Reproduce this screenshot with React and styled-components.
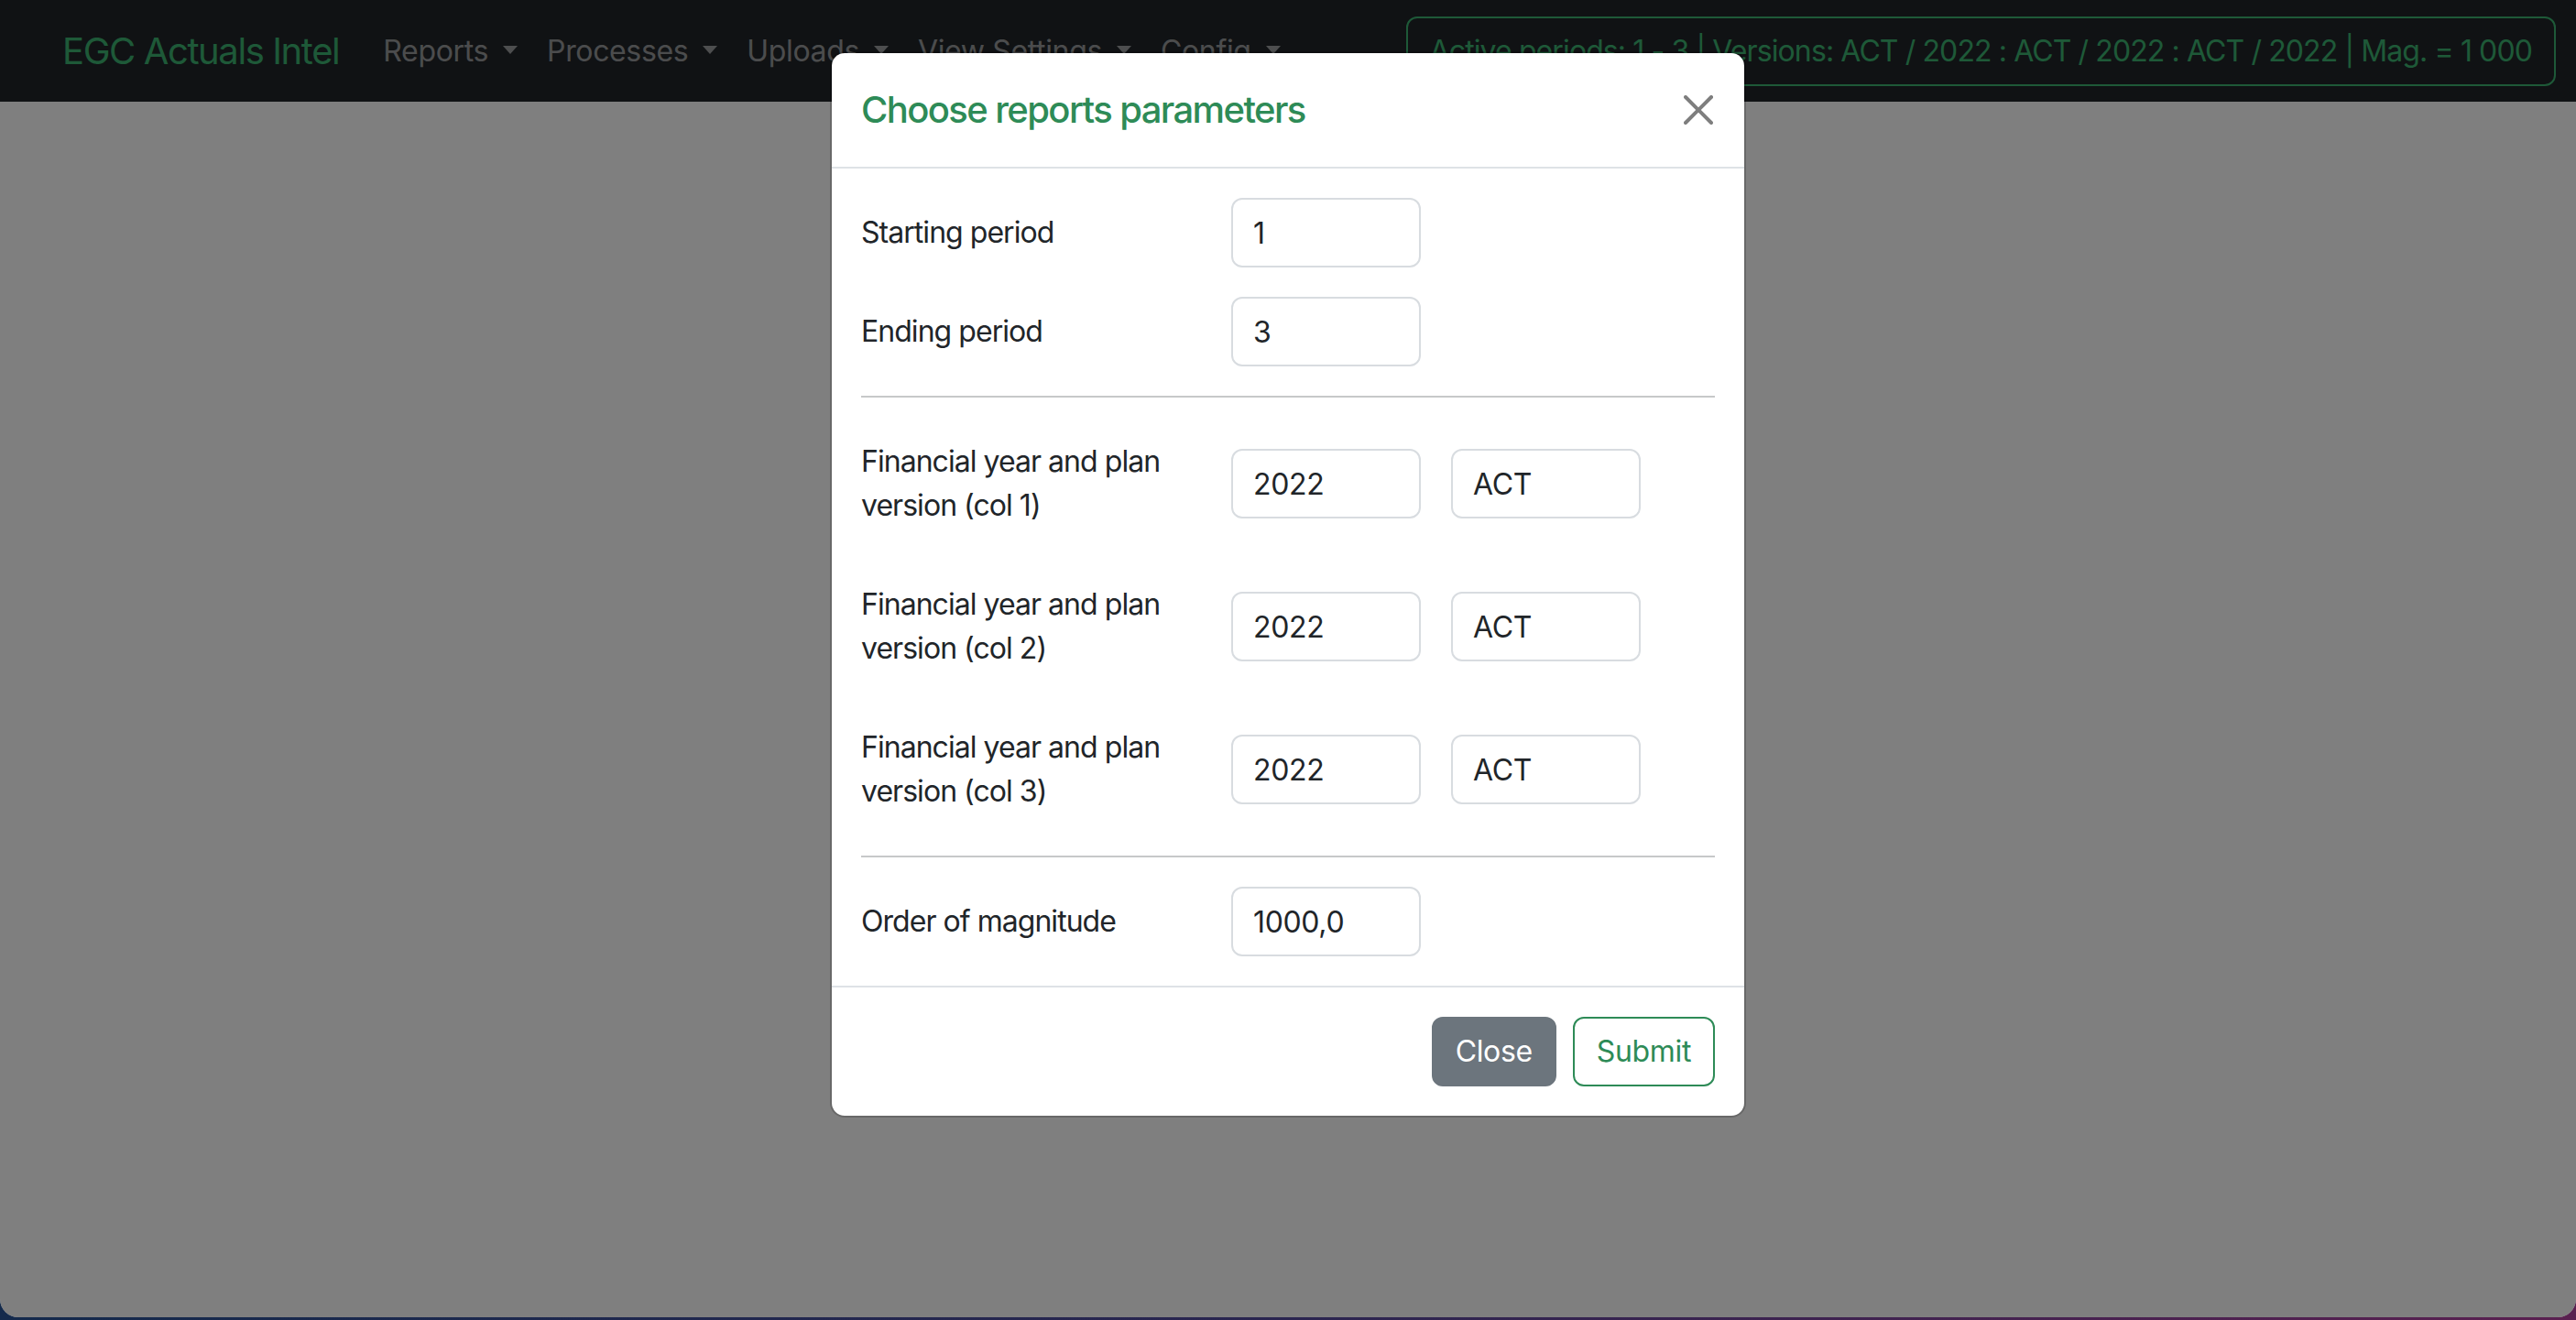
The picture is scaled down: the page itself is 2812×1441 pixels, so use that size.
import React from "react";
import styled, { createGlobalStyle } from "styled-components";

const GlobalStyle = createGlobalStyle`
  html, body { margin: 0; padding: 0; }
  body {
    font-family: Inter, "Noto Sans", "Liberation Sans", sans-serif;
    color: #212529;
    letter-spacing: -0.022em;
    overflow: hidden;
  }
  * { box-sizing: border-box; }
  input, button { letter-spacing: inherit; }
`;

const Desktop = styled.div`
  width: 100vw;
  height: 100vh;
  background: linear-gradient(90deg, #142a4c 0%, #2a2550 50%, #5a2050 100%);
`;

const Window = styled.div`
  position: relative;
  height: 1438px;
  background: #fff;
  border-radius: 0 0 20px 20px;
  overflow: hidden;
`;

const Navbar = styled.nav`
  height: 111px;
  background: #212529;
  display: flex;
  align-items: center;
  padding: 0 22px 0 68px;
`;

const Brand = styled.a`
  font-size: 40px;
  line-height: 60px;
  letter-spacing: -0.035em;
  color: #3cb371;
  margin-right: 32px;
  text-decoration: none;
`;

const NavList = styled.ul`
  display: flex;
  list-style: none;
  margin: 0;
  padding: 0;
`;

const NavLink = styled.li`
  font-size: 32px;
  line-height: 48px;
  padding: 16px 16px;
  color: rgba(255, 255, 255, 0.55);
  white-space: nowrap;
  &::after {
    content: "";
    display: inline-block;
    margin-left: 16px;
    vertical-align: 8px;
    border-top: 9px solid;
    border-left: 8px solid transparent;
    border-right: 8px solid transparent;
  }
`;

const ActiveBox = styled.div`
  margin-left: auto;
  font-size: 32px;
  line-height: 48px;
  letter-spacing: -0.028em;
  padding: 12px 24px;
  border: 2px solid #3cb371;
  border-radius: 12px;
  color: #3cb371;
  white-space: nowrap;
`;

const Backdrop = styled.div`
  position: absolute;
  inset: 0;
  background: rgba(0, 0, 0, 0.5);
`;

const ModalLayer = styled.div`
  position: absolute;
  inset: 0;
  display: flex;
  justify-content: center;
  align-items: flex-start;
  padding-top: 56px;
`;

const Modal = styled.div`
  width: 1000px;
  background: #fff;
  border: 2px solid rgba(0, 0, 0, 0.175);
  border-radius: 16px;
  background-clip: padding-box;
`;

const ModalHeader = styled.div`
  display: flex;
  align-items: center;
  padding: 32px;
  border-bottom: 2px solid #dee2e6;
`;

const ModalTitle = styled.h5`
  margin: 0;
  font-size: 40px;
  line-height: 60px;
  font-weight: 500;
  letter-spacing: -0.04em;
  color: #2e8b57;
`;

const CloseX = styled.button`
  margin: -16px -6px -16px auto;
  width: 48px;
  height: 48px;
  padding: 8px;
  border: 0;
  background: transparent;
  display: flex;
  align-items: center;
  justify-content: center;
  opacity: 0.5;
`;

const ModalBody = styled.div`
  padding: 32px;
`;

const FormRow = styled.div`
  display: flex;
  align-items: center;
  margin-bottom: ${(p) => (p.$last ? "0" : "32px")};
`;

const Label = styled.label`
  flex: 0 0 404px;
  padding: 14px 24px 14px 0;
  font-size: 32px;
  line-height: 48px;
  letter-spacing: -0.03em;
  color: #212529;
`;

const Inputs = styled.div`
  display: flex;
  gap: 33px;
`;

const Input = styled.input`
  width: 207px;
  height: 76px;
  padding: 12px 22px;
  font-family: inherit;
  font-size: 32px;
  line-height: 48px;
  color: #212529;
  border: 2px solid #d8dce0;
  border-radius: 12px;
  background: #fff;
  outline: none;
`;

const Divider = styled.hr`
  margin: 32px 0;
  border: 0;
  border-top: 2px solid #212529;
  opacity: 0.25;
`;

const ModalFooter = styled.div`
  display: flex;
  justify-content: flex-end;
  gap: 18px;
  padding: 32px;
  border-top: 2px solid #dee2e6;
`;

const Button = styled.button`
  font-family: inherit;
  font-size: 32px;
  line-height: 48px;
  padding: 12px 24px;
  border-radius: 12px;
  border: 2px solid ${(p) => (p.$variant === "secondary" ? "#6c757d" : "#2e8b57")};
  background: ${(p) => (p.$variant === "secondary" ? "#6c757d" : "transparent")};
  color: ${(p) => (p.$variant === "secondary" ? "#fff" : "#2e8b57")};
`;

const XIcon = () => (
  <svg width="32" height="32" viewBox="0 0 16 16" fill="#000">
    <path d="M.293.293a1 1 0 0 1 1.414 0L8 6.586 14.293.293a1 1 0 1 1 1.414 1.414L9.414 8l6.293 6.293a1 1 0 0 1-1.414 1.414L8 9.414l-6.293 6.293a1 1 0 0 1-1.414-1.414L6.586 8 .293 1.707a1 1 0 0 1 0-1.414z" />
  </svg>
);

const navItems = ["Reports", "Processes", "Uploads", "View Settings", "Config"];

const fyRows = [1, 2, 3];

export default function App() {
  return (
    <>
      <GlobalStyle />
      <Desktop>
        <Window>
          <Navbar>
            <Brand>EGC Actuals Intel</Brand>
            <NavList>
              {navItems.map((n) => (
                <NavLink key={n}>{n}</NavLink>
              ))}
            </NavList>
            <ActiveBox>
              Active periods: 1 - 3 | Versions: ACT / 2022 : ACT / 2022 : ACT / 2022 | Mag. = 1 000
            </ActiveBox>
          </Navbar>
          <Backdrop />
          <ModalLayer>
            <Modal>
              <ModalHeader>
                <ModalTitle>Choose reports parameters</ModalTitle>
                <CloseX aria-label="Close">
                  <XIcon />
                </CloseX>
              </ModalHeader>
              <ModalBody>
                <FormRow>
                  <Label>Starting period</Label>
                  <Inputs>
                    <Input defaultValue="1" />
                  </Inputs>
                </FormRow>
                <FormRow $last>
                  <Label>Ending period</Label>
                  <Inputs>
                    <Input defaultValue="3" />
                  </Inputs>
                </FormRow>
                <Divider />
                {fyRows.map((i) => (
                  <FormRow key={i} $last={i === 3}>
                    <Label>Financial year and plan version (col {i})</Label>
                    <Inputs>
                      <Input defaultValue="2022" />
                      <Input defaultValue="ACT" />
                    </Inputs>
                  </FormRow>
                ))}
                <Divider />
                <FormRow $last>
                  <Label>Order of magnitude</Label>
                  <Inputs>
                    <Input defaultValue="1000,0" />
                  </Inputs>
                </FormRow>
              </ModalBody>
              <ModalFooter>
                <Button $variant="secondary">Close</Button>
                <Button $variant="success">Submit</Button>
              </ModalFooter>
            </Modal>
          </ModalLayer>
        </Window>
      </Desktop>
    </>
  );
}
